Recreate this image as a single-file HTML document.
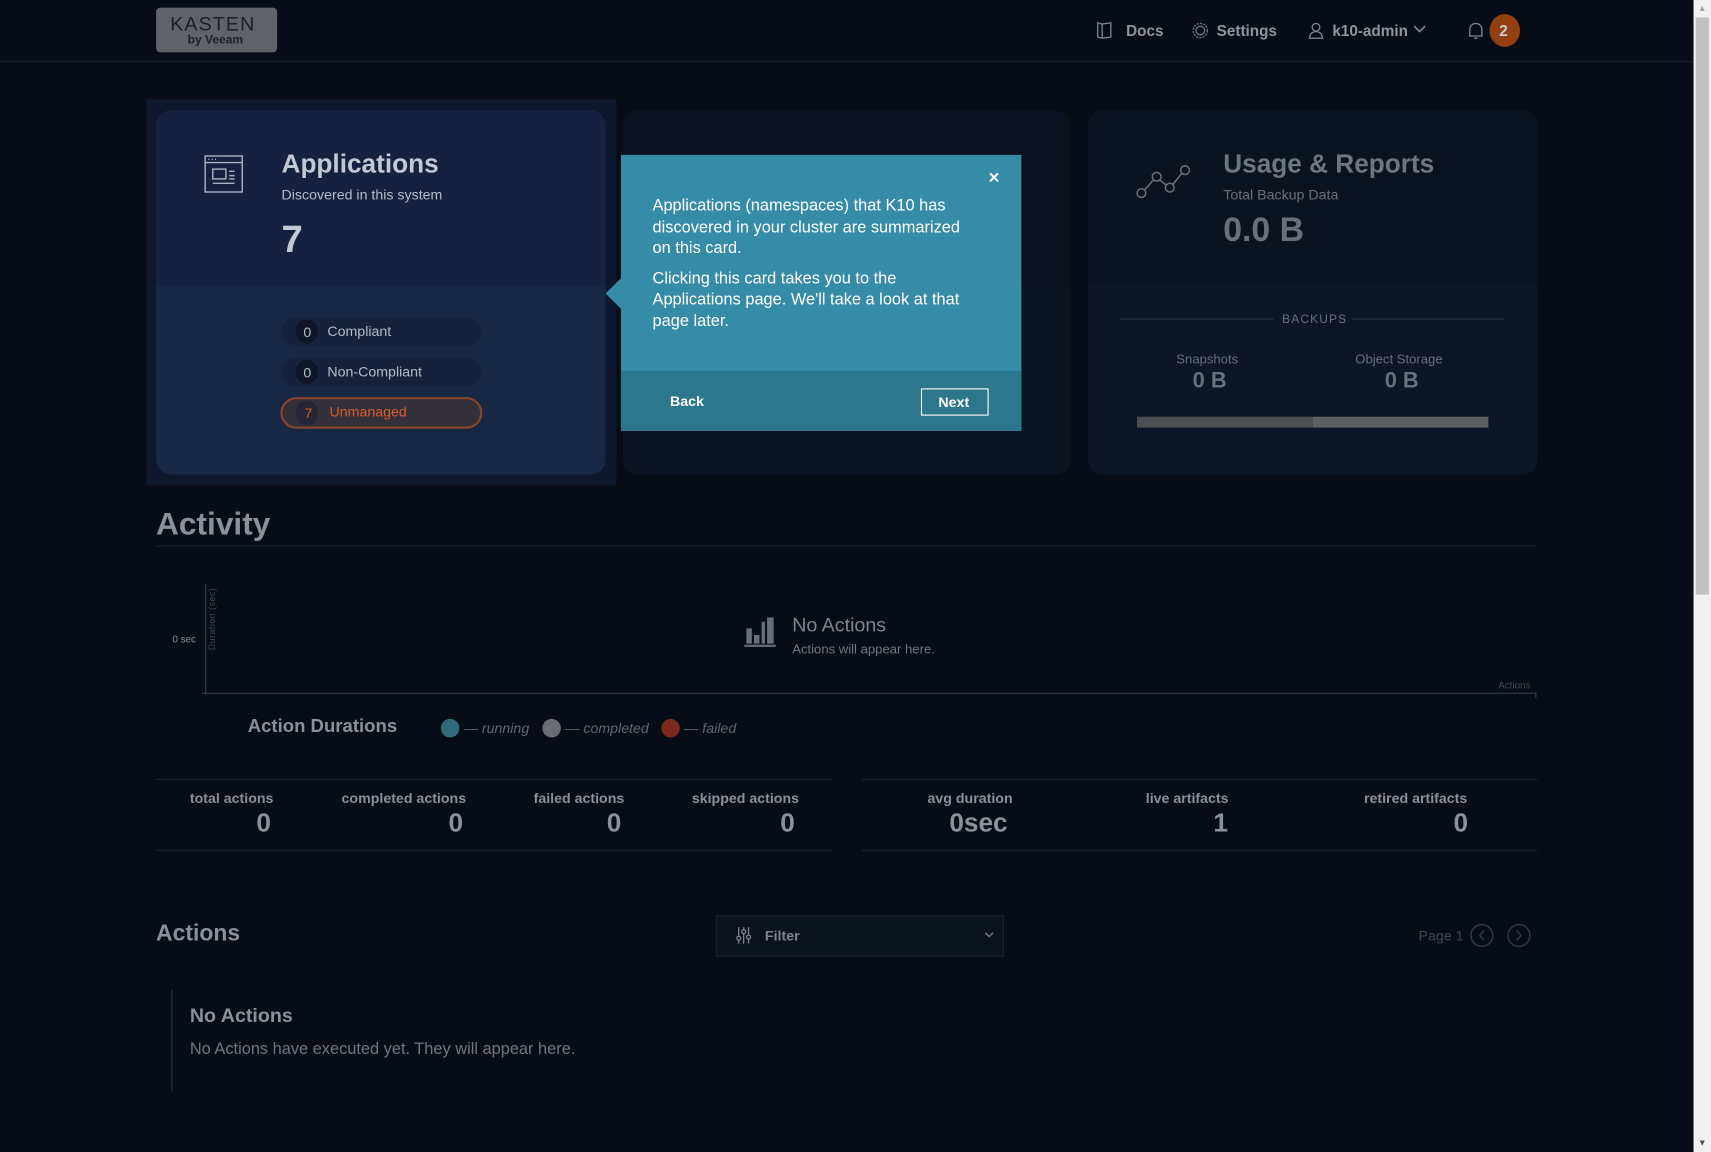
<!DOCTYPE html>
<html><head><meta charset="utf-8"><style>
*{box-sizing:border-box;margin:0;padding:0}
html,body{width:1711px;height:1152px;overflow:hidden;background:#080c16}
#w{position:absolute;left:0;top:0;width:1568px;height:1056px;transform:scale(1.09119,1.09091);transform-origin:0 0;background:#080c16;font-family:"Liberation Sans",sans-serif;color:#8a909c}
.a{position:absolute}
.t{position:absolute;white-space:nowrap}
.b{font-weight:bold}
</style></head><body><div id="w">
<!-- header -->
<div class="a" style="left:0;top:56px;width:1552px;height:1px;background:#1a2030"></div>
<div class="a" style="left:143px;top:7px;width:111px;height:41px;background:#5f6368;border-radius:4px"></div>
<div class="t" style="left:156px;top:12px;font-size:18px;letter-spacing:1px;color:#1b1f27">KASTEN</div>
<div class="t b" style="left:172px;top:31px;font-size:11px;color:#1b1f27">by Veeam</div>
<svg class="a" style="left:1004px;top:19px" width="16" height="17" viewBox="0 0 16 17" fill="none" stroke="#7e8490" stroke-width="1.2"><path d="M2 2l4 1v13l-4-1zM6 3l8-1v13l-8 1"/></svg>
<div class="t b" style="left:1032px;top:20px;font-size:14px;color:#8e95a2">Docs</div>
<svg class="a" style="left:1092px;top:20px" width="16" height="16" viewBox="0 0 16 16" fill="none" stroke="#6e7480" stroke-width="1.2"><circle cx="8" cy="8" r="6.5" stroke-dasharray="2 1"/><circle cx="8" cy="8" r="4"/></svg>
<div class="t b" style="left:1115px;top:20px;font-size:14px;color:#8e95a2">Settings</div>
<svg class="a" style="left:1199px;top:20px" width="14" height="16" viewBox="0 0 14 16" fill="none" stroke="#7e8490" stroke-width="1.2"><circle cx="7" cy="5" r="3.5"/><path d="M1 15c0-4 3-6 6-6s6 2 6 6z"/></svg>
<div class="t b" style="left:1221px;top:20px;font-size:14px;color:#8e95a2">k10-admin</div>
<svg class="a" style="left:1295px;top:23px" width="12" height="8" viewBox="0 0 12 8" fill="none" stroke="#8e95a2" stroke-width="1.3"><path d="M1 1l5 5 5-5"/></svg>
<svg class="a" style="left:1345px;top:19px" width="15" height="18" viewBox="0 0 15 18" fill="none" stroke="#7e8490" stroke-width="1.2"><path d="M2 14V8a5.5 5.5 0 0 1 11 0v6zM1 14h13M6 16h3"/></svg>
<div class="a" style="left:1365px;top:13px;width:28px;height:30px;border-radius:50%;background:#92400f"></div>
<div class="t b" style="left:1374px;top:20px;font-size:14px;color:#c8ccd2">2</div>

<!-- highlight + apps card -->
<div class="a" style="left:134px;top:91px;width:431px;height:354px;background:#0e182c"></div>
<div class="a" style="left:143px;top:101px;width:412px;height:334px;border-radius:14px;background:#172844;overflow:hidden"><div style="height:161px;background:#15223f"></div></div>
<svg class="a" style="left:187px;top:142px" width="36" height="35" viewBox="0 0 36 35" fill="none" stroke="#aab2c0" stroke-width="1.3"><rect x="1" y="1" width="34" height="33"/><path d="M1 7h34M4 4h1M7 4h1M10 4h1"/><rect x="8" y="13" width="12" height="9"/><path d="M23 15h5M23 19h5M23 22h5M8 26h20"/></svg>
<div class="t b" style="left:258px;top:137px;font-size:24px;color:#c3c9d3">Applications</div>
<div class="t" style="left:258px;top:171px;font-size:13px;color:#b5bcc8">Discovered in this system</div>
<div class="t b" style="left:258px;top:200px;font-size:35px;color:#c3c9d3">7</div>
<div class="a" style="left:258px;top:291px;width:183px;height:26px;border-radius:13px;background:#15223b"></div>
<div class="a" style="left:271px;top:293px;width:20px;height:22px;border-radius:10px;background:#0e1629"></div>
<div class="t" style="left:278px;top:297px;font-size:13px;color:#b5bcc8">0</div>
<div class="t" style="left:300px;top:296px;font-size:13px;color:#b5bcc8">Compliant</div>
<div class="a" style="left:258px;top:328px;width:183px;height:26px;border-radius:13px;background:#15223b"></div>
<div class="a" style="left:271px;top:330px;width:20px;height:22px;border-radius:10px;background:#0e1629"></div>
<div class="t" style="left:278px;top:334px;font-size:13px;color:#b5bcc8">0</div>
<div class="t" style="left:300px;top:333px;font-size:13px;color:#b5bcc8">Non-Compliant</div>
<div class="a" style="left:257px;top:364px;width:185px;height:29px;border-radius:15px;background:#33303a;border:2px solid #8a4428"></div>
<div class="a" style="left:271px;top:367px;width:20px;height:23px;border-radius:10px;background:#252533"></div>
<div class="t" style="left:279px;top:371px;font-size:13px;color:#d85a2c">7</div>
<div class="t" style="left:302px;top:370px;font-size:13px;color:#d85a2c">Unmanaged</div>

<!-- middle card -->
<div class="a" style="left:571px;top:101px;width:410px;height:334px;border-radius:14px;background:#0c1424;overflow:hidden"><div style="height:161px;background:#0b1120"></div></div>
<!-- right card -->
<div class="a" style="left:997px;top:101px;width:412px;height:334px;border-radius:14px;background:#0d1626;overflow:hidden"><div style="height:161px;background:#0b1222"></div></div>
<svg class="a" style="left:1040px;top:150px" width="52" height="32" viewBox="0 0 52 32" fill="none" stroke="#6a707b" stroke-width="1.4"><circle cx="6" cy="27" r="4"/><circle cx="20" cy="12" r="4"/><circle cx="32" cy="22" r="4"/><circle cx="46" cy="6" r="4"/><path d="M9 24l8-9M23 15l6 5M35 19l8-10"/></svg>
<div class="t b" style="left:1121px;top:137px;font-size:24px;color:#6f7683">Usage &amp; Reports</div>
<div class="t" style="left:1121px;top:171px;font-size:13px;color:#6a707b">Total Backup Data</div>
<div class="t b" style="left:1121px;top:193px;font-size:31px;color:#6a707b">0.0 B</div>
<div class="a" style="left:1027px;top:292px;width:140px;height:1px;background:#2a303a"></div>
<div class="a" style="left:1239px;top:292px;width:140px;height:1px;background:#2a303a"></div>
<div class="t" style="left:1175px;top:287px;font-size:11px;letter-spacing:1px;color:#6a707b">BACKUPS</div>
<div class="t" style="left:1078px;top:322px;font-size:12px;color:#6a707b">Snapshots</div>
<div class="t b" style="left:1093px;top:338px;font-size:20px;color:#6a707b">0 B</div>
<div class="t" style="left:1242px;top:322px;font-size:12px;color:#6a707b">Object Storage</div>
<div class="t b" style="left:1269px;top:338px;font-size:20px;color:#6a707b">0 B</div>
<div class="a" style="left:1042px;top:382px;width:161px;height:10px;background:#4d4f53"></div>
<div class="a" style="left:1203px;top:382px;width:161px;height:10px;background:#5d5f63"></div>

<!-- tooltip -->
<div class="a" style="left:555px;top:254px;width:0;height:0;border-top:15px solid transparent;border-bottom:15px solid transparent;border-right:15px solid #368ba6"></div>
<div class="a" style="left:569px;top:142px;width:367px;height:253px;background:#368ba6;overflow:hidden"><div style="position:absolute;left:0;top:198px;width:367px;height:55px;background:#2c778e"></div></div>
<div class="t b" style="left:906px;top:153px;font-size:17px;color:#fff">×</div>
<div class="a" style="left:598px;top:179px;width:292px;font-size:15px;line-height:19.5px;color:#fff">Applications (namespaces) that K10 has discovered in your cluster are summarized on this card.<div style="height:8px"></div>Clicking this card takes you to the Applications page. We'll take a look at that page later.</div>
<div class="t b" style="left:614px;top:360px;font-size:13px;color:#fff">Back</div>
<div class="a" style="left:844px;top:356px;width:62px;height:25px;border:1px solid #fff"></div>
<div class="t b" style="left:860px;top:361px;font-size:13px;color:#fff">Next</div>

<!-- activity -->
<div class="t b" style="left:143px;top:465px;font-size:29px;color:#8a909c">Activity</div>
<div class="a" style="left:143px;top:500px;width:1266px;height:1px;background:#1b2130"></div>
<div class="a" style="left:188px;top:535px;width:1px;height:102px;background:#363c48"></div>
<div class="a" style="left:185px;top:635px;width:1223px;height:1px;background:#363c48"></div>
<div class="a" style="left:1407px;top:635px;width:1px;height:5px;background:#363c48"></div>
<div class="t" style="left:158px;top:581px;font-size:9px;color:#8a909c">0 sec</div>
<div class="t" style="left:190px;top:596px;font-size:8px;color:#3d4a5a;transform:rotate(-90deg);transform-origin:0 0;letter-spacing:0.5px">Duration (sec)</div>
<div class="t" style="left:1373px;top:623px;font-size:9px;color:#3d4a5a">Actions</div>
<svg class="a" style="left:682px;top:566px" width="29" height="28" viewBox="0 0 29 28" fill="#6a707b"><rect x="2" y="10" width="5" height="14"/><rect x="9" y="16" width="5" height="8"/><rect x="16" y="4" width="3" height="20"/><rect x="21" y="0" width="6" height="24"/><rect x="0" y="25" width="29" height="2"/></svg>
<div class="t" style="left:726px;top:563px;font-size:18px;color:#7d8390">No Actions</div>
<div class="t" style="left:726px;top:588px;font-size:12px;color:#6f7683">Actions will appear here.</div>
<div class="t b" style="left:227px;top:656px;font-size:17px;color:#8a909c">Action Durations</div>
<div class="a" style="left:404px;top:659px;width:17px;height:17px;border-radius:50%;background:#2f6a7d"></div>
<div class="t" style="left:425px;top:660px;font-size:13px;font-style:italic;color:#5f6672">— running</div>
<div class="a" style="left:497px;top:659px;width:17px;height:17px;border-radius:50%;background:#6a6d72"></div>
<div class="t" style="left:518px;top:660px;font-size:13px;font-style:italic;color:#5f6672">— completed</div>
<div class="a" style="left:606px;top:659px;width:17px;height:17px;border-radius:50%;background:#7a2a1c"></div>
<div class="t" style="left:627px;top:660px;font-size:13px;font-style:italic;color:#5f6672">— failed</div>

<div class="a" style="left:143px;top:714px;width:619px;height:1px;background:#1b2130"></div>
<div class="a" style="left:143px;top:779px;width:619px;height:1px;background:#1b2130"></div>
<div class="a" style="left:790px;top:714px;width:619px;height:1px;background:#1b2130"></div>
<div class="a" style="left:790px;top:779px;width:619px;height:1px;background:#1b2130"></div>
<div class="t b" style="left:174px;top:724px;font-size:13px">total actions</div>
<div class="t b" style="left:235px;top:741px;font-size:24px">0</div>
<div class="t b" style="left:313px;top:724px;font-size:13px">completed actions</div>
<div class="t b" style="left:411px;top:741px;font-size:24px">0</div>
<div class="t b" style="left:489px;top:724px;font-size:13px">failed actions</div>
<div class="t b" style="left:556px;top:741px;font-size:24px">0</div>
<div class="t b" style="left:634px;top:724px;font-size:13px">skipped actions</div>
<div class="t b" style="left:715px;top:741px;font-size:24px">0</div>
<div class="t b" style="left:850px;top:724px;font-size:13px">avg duration</div>
<div class="t b" style="left:870px;top:741px;font-size:24px">0sec</div>
<div class="t b" style="left:1050px;top:724px;font-size:13px">live artifacts</div>
<div class="t b" style="left:1112px;top:741px;font-size:24px">1</div>
<div class="t b" style="left:1250px;top:724px;font-size:13px">retired artifacts</div>
<div class="t b" style="left:1332px;top:741px;font-size:24px">0</div>

<!-- actions -->
<div class="t b" style="left:143px;top:844px;font-size:21px">Actions</div>
<div class="a" style="left:656px;top:839px;width:264px;height:38px;background:#0b1220;border:1px solid #1b2232"></div>
<svg class="a" style="left:674px;top:849px" width="15" height="17" viewBox="0 0 15 17" fill="none" stroke="#7e8490" stroke-width="1.2"><path d="M3 1v15M7.5 1v15M12 1v15"/><circle cx="3" cy="11" r="1.8" fill="#0b1220"/><circle cx="7.5" cy="5" r="1.8" fill="#0b1220"/><circle cx="12" cy="10" r="1.8" fill="#0b1220"/></svg>
<div class="t b" style="left:701px;top:850px;font-size:13px;color:#7e8490">Filter</div>
<svg class="a" style="left:902px;top:854px" width="9" height="6" viewBox="0 0 9 6" fill="none" stroke="#7e8490" stroke-width="1.2"><path d="M1 1l3.5 3.5L8 1"/></svg>
<div class="t" style="left:1300px;top:850px;font-size:13px;color:#3e4450">Page 1</div>
<svg class="a" style="left:1347px;top:846px" width="58" height="23" viewBox="0 0 58 23" fill="none" stroke="#353b46" stroke-width="1.2"><circle cx="11" cy="11.5" r="10"/><path d="M13 7l-4 4.5 4 4.5"/><circle cx="45" cy="11.5" r="10"/><path d="M43 7l4 4.5-4 4.5"/></svg>
<div class="a" style="left:157px;top:907px;width:1px;height:94px;background:#2a303b"></div>
<div class="t b" style="left:174px;top:921px;font-size:18px">No Actions</div>
<div class="t" style="left:174px;top:953px;font-size:15px;color:#6f7683">No Actions have executed yet. They will appear here.</div>

<!-- scrollbar -->
<div class="a" style="left:1552px;top:0;width:16px;height:1056px;background:#f1f1f1"></div>
<div class="a" style="left:1554px;top:16px;width:12px;height:529px;background:#c1c1c1"></div>
<div class="t" style="left:1556px;top:3px;font-size:8px;color:#a3a3a3">▲</div>
<div class="t" style="left:1556px;top:1043px;font-size:8px;color:#505050">▼</div>
</div></body></html>
